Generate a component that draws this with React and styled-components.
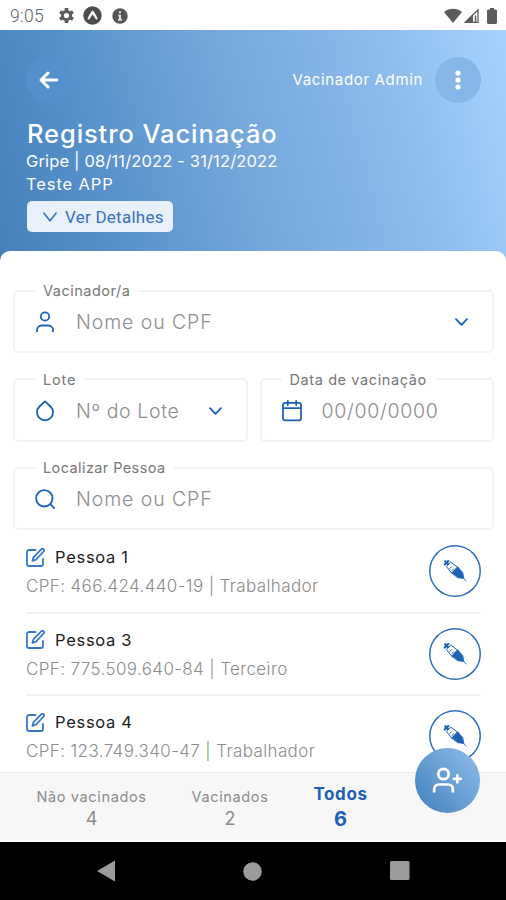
import styled, { createGlobalStyle } from "styled-components";

const GlobalStyle = createGlobalStyle`
  * {
    box-sizing: border-box;
  }
  body {
    margin: 0;
    background: #fff;
    font-family: Inter, "Open Sans", sans-serif;
  }
`;

const Screen = styled.div`
  position: relative;
  width: 506px;
  height: 900px;
  display: flex;
  flex-direction: column;
  overflow: hidden;
  background: #fff;
`;

/* ---- status bar ---- */
const StatusBar = styled.div`
  height: 30px;
  flex: none;
  display: flex;
  align-items: center;
  justify-content: space-between;
  padding: 1px 9px 0 10px;
  color: #5c5c5c;
`;

const Clock = styled.span`
  width: 48px;
  font: 300 17.5px/30px Roboto, sans-serif;
  letter-spacing: 0.3px;
  color: #5f5f5f;
`;

const StatusGroup = styled.div`
  display: flex;
  align-items: center;
`;

/* ---- header ---- */
const Header = styled.header`
  height: 233px;
  flex: none;
  padding: 27px 25px 0 26px;
  color: #fff;
  background: linear-gradient(75deg, #4680ba 0%, #5690ca 20%, #77a9dd 50%, #8bbbeb 76%, #a8d3ff 100%);
`;

const TopRow = styled.div`
  display: flex;
  align-items: center;
  height: 46px;
`;

const RoundButton = styled.button`
  width: 46px;
  height: 46px;
  padding: 0;
  border: 0;
  border-radius: 50%;
  display: grid;
  place-items: center;
  color: #fff;
  background: ${({ $bg }) => $bg};
`;

const UserName = styled.span`
  margin: -1px 12px 0 auto;
  font-size: 15px;
  letter-spacing: 0.65px;
`;

const Title = styled.h1`
  margin: 15px 0 0 1px;
  font-size: 25.5px;
  font-weight: 500;
  line-height: 32px;
  letter-spacing: 0.9px;
`;

const Info = styled.p`
  margin: 0;
  font-size: 16.5px;
  line-height: 22.5px;
  letter-spacing: ${({ $track }) => $track || "0.15px"};
`;

const DetailsButton = styled.button`
  width: 146px;
  height: 31px;
  margin: 6px 0 0 1px;
  padding: 1px 0 0 16px;
  border: 0;
  border-radius: 5px;
  display: flex;
  align-items: center;
  gap: 8px;
  font: 400 17px Roboto, sans-serif;
  letter-spacing: 0.25px;
  white-space: nowrap;
  color: #3a6fbd;
  background: #e8f1fb;
`;

/* ---- form ---- */
const Panel = styled.main`
  flex: 1;
  min-height: 0;
  margin-top: -12px;
  padding-top: 31px;
  border-radius: 10px 10px 0 0;
  overflow: hidden;
  background: #fff;
`;

const Form = styled.form`
  display: grid;
  grid-template-columns: 1fr 1fr;
  gap: 17.5px 12px;
  padding: 0 12px 0 13px;
`;

const Field = styled.fieldset`
  min-width: 0;
  height: 71px;
  margin: 0;
  padding: 0 24px 0 20px;
  border: 2px solid #f3f3f4;
  border-radius: 5px;
  grid-column: ${({ $half }) => ($half ? "auto" : "1 / -1")};
`;

const Legend = styled.legend`
  padding: 0 8px;
  font-size: 14.5px;
  line-height: 17px;
  letter-spacing: ${({ $track }) => $track || "0.5px"};
  color: #777;
`;

const FieldBody = styled.div`
  height: 46px;
  display: flex;
  align-items: center;
  color: #1d62b5;

  svg:last-child:not(:first-child) {
    margin-left: auto;
  }
`;

const Placeholder = styled.span`
  margin-left: ${({ $left }) => $left || 21}px;
  font-size: 19.5px;
  font-weight: 300;
  letter-spacing: ${({ $track }) => $track || "0.9px"};
  white-space: nowrap;
  color: #8e8e8e;
`;

/* ---- list ---- */
const List = styled.ul`
  margin: 0;
  padding: 1px 25px 0 26px;
  list-style: none;
`;

const Row = styled.li`
  height: 82.5px;
  display: flex;
  align-items: center;
  justify-content: space-between;
  border-bottom: 2px solid #f2f2f3;
`;

const Name = styled.div`
  display: flex;
  align-items: center;
  gap: 10px;
  height: 26px;
  font-size: 16.5px;
  letter-spacing: 0.7px;
  color: #1c1c1c;
`;

const Cpf = styled.div`
  margin-top: 4px;
  font-size: 17px;
  font-weight: 300;
  line-height: 24px;
  letter-spacing: 0.38px;
  white-space: nowrap;
  color: #8c8c8c;
`;

const VaccineButton = styled.button`
  width: 52px;
  height: 52px;
  padding: 0;
  border: 0;
  border-radius: 50%;
  display: grid;
  place-items: center;
  background: #fff;
  box-shadow: inset 0 0 0 1.5px #2f6fbb;
`;

/* ---- footer ---- */
const Tabs = styled.footer`
  height: 70px;
  flex: none;
  display: flex;
  padding: 0 95px 0 22px;
  border-top: 1px solid #ececec;
  border-bottom: 2px solid #fff;
  background: #f7f7f7;
`;

const Tab = styled.div`
  flex: 0 0 ${({ $w }) => $w}px;
  padding-top: ${({ $active }) => ($active ? 10 : 13)}px;
  text-align: center;
  font-size: ${({ $active }) => ($active ? 17 : 14.5)}px;
  font-weight: ${({ $active }) => ($active ? 700 : 400)};
  line-height: 22px;
  letter-spacing: ${({ $active }) => ($active ? "0.6px" : "0.65px")};
  white-space: nowrap;
  color: ${({ $active }) => ($active ? "#1d5fb4" : "#8b8b8b")};
`;

const Count = styled.div`
  font-size: ${({ $active }) => ($active ? 20 : 18)}px;
  line-height: ${({ $active }) => ($active ? 29 : 21)}px;
  letter-spacing: 0;
`;

const AddButton = styled.button`
  position: absolute;
  right: 26px;
  bottom: 87px;
  width: 65px;
  height: 65px;
  padding: 0;
  border: 0;
  border-radius: 50%;
  display: grid;
  place-items: center;
  background: linear-gradient(50deg, #4a86c1 10%, #8cbbe9 95%);
`;

const NavBar = styled.nav`
  height: 58px;
  flex: none;
  display: flex;
  align-items: center;
  justify-content: space-between;
  padding: 0 96px 0 97px;
  background: #000;
`;

/* ---- icons ---- */
const Icon = styled.svg`
  display: block;
  flex: none;
  margin-left: ${({ $left }) => $left || 0}px;
`;

const Svg = ({ w, h, left, children, stroke = "currentColor", sw = 1.8 }) => (
  <Icon
    $left={left}
    width={w}
    height={h}
    viewBox={`0 0 ${w} ${h}`}
    fill="none"
    stroke={stroke}
    strokeWidth={sw}
    strokeLinecap="round"
    strokeLinejoin="round"
  >
    {children}
  </Icon>
);

const GearIcon = () => (
  <Svg w={17} h={17} sw={3}>
    <circle cx="8.5" cy="8.5" r="4.1" />
    <path
      strokeWidth="3.6"
      strokeLinecap="butt"
      d="M8.500 4.500V1M8.500 12.500V16M5 6.500 2 4.700M12 6.500l3-1.800M5 10.500l-3 1.800M12 10.500l3 1.800"
    />
  </Svg>
);

const ExpoIcon = () => (
  <Svg w={19} h={19} left={8}>
    <circle cx="9.5" cy="9.5" r="9.2" fill="#4d4d4d" stroke="none" />
    <path
      fill="#f4f4f4"
      stroke="none"
      d="M9 4.800h1.200c1.800 2.300 3.200 5 4.500 7.600-.2 1-1 1.400-1.800.9L9.600 8.600l-3.300 4.700c-.8.5-1.600.1-1.800-.9C5.700 9.800 7.200 7.100 9 4.800z"
    />
  </Svg>
);

const InfoIcon = () => (
  <Svg w={16} h={16} left={10}>
    <circle cx="8" cy="8" r="7.7" fill="#555" stroke="none" />
    <path stroke="#ddd" strokeWidth="2" strokeLinecap="butt" d="M8 3.300v2M8 6.800v5.400M6.300 7.500H8M6 11.700h4" />
  </Svg>
);

const WifiIcon = () => (
  <Svg w={18} h={15}>
    <path fill="currentColor" stroke="none" d="M0 4C5.300-.4 12.700-.4 18 4L9 15z" />
  </Svg>
);

const SignalIcon = () => (
  <Svg w={15} h={15} left={2}>
    <path fill="currentColor" stroke="none" d="M0 15 9 6v9z" />
    <path strokeWidth="1.3" strokeLinejoin="miter" d="M1.500 14.300 14 1.800v12.500z" />
    <path strokeWidth="1.5" d="M11.500 8v6" />
  </Svg>
);

const BatteryIcon = () => (
  <Svg w={10} h={16} left={8}>
    <path fill="currentColor" stroke="none" d="M3 0h4v1.500h2.200l.8.8V15l-1 1H1l-1-1V2.300l.8-.8H3z" />
  </Svg>
);

const BackIcon = () => (
  <Svg w={20} h={18} sw={2.9}>
    <path d="M18 9H2.500M9 2 2 9l7 7" />
  </Svg>
);

const DotsIcon = () => (
  <Svg w={6} h={20}>
    <g fill="#fff" stroke="none">
      <circle cx="3" cy="3" r="2.6" />
      <circle cx="3" cy="10" r="2.6" />
      <circle cx="3" cy="17" r="2.6" />
    </g>
  </Svg>
);

const ChevronIcon = ({ w = 13, h = 8, sw = 1.8 }) => (
  <Svg w={w} h={h} sw={sw}>
    <path d={`M1 1.200 ${w / 2} ${h - 1.2} ${w - 1} 1.200`} />
  </Svg>
);

const UserIcon = () => (
  <Svg w={20} h={22}>
    <circle cx="10" cy="5.5" r="4.2" />
    <path strokeLinecap="butt" d="M2 21v-2a4.500 4.500 0 0 1 4.500-4.500h7A4.500 4.500 0 0 1 18 19v2" />
  </Svg>
);

const DropIcon = () => (
  <Svg w={20} h={22}>
    <path d="M10 1.300 15.500 6.500a8 8 0 1 1-11 0z" />
  </Svg>
);

const CalendarIcon = () => (
  <Svg w={20} h={22}>
    <rect x="1" y="2.800" width="18" height="17.500" rx="2" />
    <path d="M1 8.200h18M5.800 1v4M14.200 1v4" />
  </Svg>
);

const SearchIcon = () => (
  <Svg w={20} h={20}>
    <circle cx="9.3" cy="9.3" r="8.2" />
    <path d="m15.200 15.200 4 4" />
  </Svg>
);

const EditIcon = () => (
  <Svg w={19} h={19} sw={1.8} stroke="#3a78c4">
    <path d="M9.500 2H3a2 2 0 0 0-2 2v12a2 2 0 0 0 2 2h12a2 2 0 0 0 2-2v-5" />
    <path d="M15.200 1.300a1.600 1.600 0 0 1 2.400 2.200L10 11.700l-3.600 1.200 1-3.600z" />
  </Svg>
);

const SyringeIcon = () => (
  <Svg w={26} h={26} stroke="#1d62b5" sw={1.5}>
    <path strokeWidth="2.2" d="M2.800 6.500 6.300 3M3.200 3.200l3 3" />
    <path d="M4.800 8.400 8.600 4l7.400 5.500-5.500 6z" fill="#fff" strokeWidth="1" />
    <path d="m7.800 10.500 1.500-1.600M10 12.500l1.500-1.600" strokeWidth="1" />
    <path d="m9.800 14.800 5.800-6 5.200 5.900 1 5.800-5.900-.8z" fill="#1d62b5" strokeWidth=".8" />
    <path d="m21.300 20 2.800 3" strokeWidth=".9" />
  </Svg>
);

const AddUserIcon = () => (
  <Svg w={31} h={27} stroke="#fff" sw={2.7}>
    <circle cx="11.5" cy="7" r="5.2" />
    <path strokeLinecap="butt" d="M2.200 25.500V22a4.500 4.500 0 0 1 4.500-4.500h9.600a4.500 4.500 0 0 1 4.500 4.500v3.500" />
    <path d="M25.300 8.300v7M21.800 11.800h7" />
  </Svg>
);

const people = [
  { name: "Pessoa 1", cpf: "CPF: 466.424.440-19 | Trabalhador" },
  { name: "Pessoa 3", cpf: "CPF: 775.509.640-84 | Terceiro" },
  { name: "Pessoa 4", cpf: "CPF: 123.749.340-47 | Trabalhador" },
];

function App() {
  return (
    <Screen>
      <GlobalStyle />
      <StatusBar>
        <StatusGroup>
          <Clock>9:05</Clock>
          <GearIcon />
          <ExpoIcon />
          <InfoIcon />
        </StatusGroup>
        <StatusGroup>
          <WifiIcon />
          <SignalIcon />
          <BatteryIcon />
        </StatusGroup>
      </StatusBar>

      <Header>
        <TopRow>
          <RoundButton $bg="#5390cc">
            <BackIcon />
          </RoundButton>
          <UserName>Vacinador Admin</UserName>
          <RoundButton $bg="#86b6e8">
            <DotsIcon />
          </RoundButton>
        </TopRow>
        <Title>Registro Vacinação</Title>
        <Info>Gripe | 08/11/2022 - 31/12/2022</Info>
        <Info $track="0.9px">Teste APP</Info>
        <DetailsButton>
          <ChevronIcon w={14} h={10} sw={1.6} />
          Ver Detalhes
        </DetailsButton>
      </Header>

      <Panel>
        <Form>
          <Field>
            <Legend>Vacinador/a</Legend>
            <FieldBody>
              <UserIcon />
              <Placeholder>Nome ou CPF</Placeholder>
              <ChevronIcon />
            </FieldBody>
          </Field>
          <Field $half>
            <Legend $track="0.8px">Lote</Legend>
            <FieldBody>
              <DropIcon />
              <Placeholder $track="0.65px">Nº do Lote</Placeholder>
              <ChevronIcon />
            </FieldBody>
          </Field>
          <Field $half>
            <Legend $track="0.6px">Data de vacinação</Legend>
            <FieldBody>
              <CalendarIcon />
              <Placeholder $left={20} $track="0.7px">
                00/00/0000
              </Placeholder>
            </FieldBody>
          </Field>
          <Field>
            <Legend $track="0.4px">Localizar Pessoa</Legend>
            <FieldBody>
              <SearchIcon />
              <Placeholder>Nome ou CPF</Placeholder>
            </FieldBody>
          </Field>
        </Form>
        <List>
          {people.map((p) => (
            <Row key={p.name}>
              <div>
                <Name>
                  <EditIcon />
                  {p.name}
                </Name>
                <Cpf>{p.cpf}</Cpf>
              </div>
              <VaccineButton>
                <SyringeIcon />
              </VaccineButton>
            </Row>
          ))}
        </List>
      </Panel>

      <Tabs>
        <Tab $w={139}>
          Não vacinados
          <Count>4</Count>
        </Tab>
        <Tab $w={138}>
          Vacinados
          <Count>2</Count>
        </Tab>
        <Tab $w={83} $active>
          Todos
          <Count $active>6</Count>
        </Tab>
      </Tabs>

      <NavBar>
        <Svg w={18} h={22}>
          <path fill="#9b9b9b" stroke="none" d="M0 11 18 .5v21z" />
        </Svg>
        <Svg w={19} h={19}>
          <circle cx="9.5" cy="9.5" r="9.3" fill="#9b9b9b" stroke="none" />
        </Svg>
        <Svg w={20} h={20}>
          <rect width="19.500" height="19" rx="1.500" fill="#9b9b9b" stroke="none" />
        </Svg>
      </NavBar>

      <AddButton>
        <AddUserIcon />
      </AddButton>
    </Screen>
  );
}

export default App;
